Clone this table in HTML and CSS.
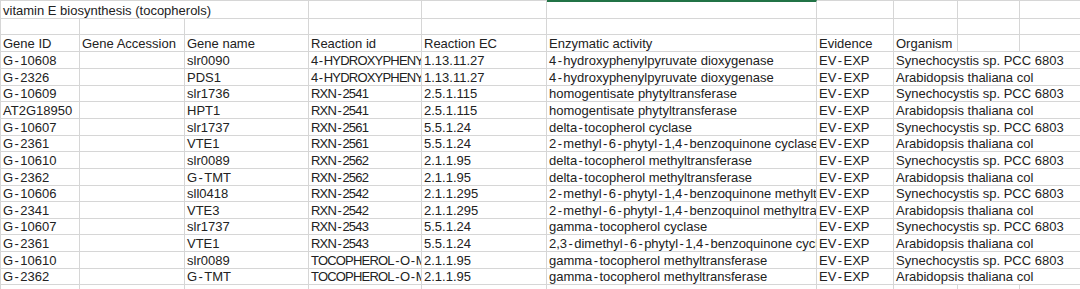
FILE: index.html
```html
<!DOCTYPE html>
<html>
<head>
<meta charset="utf-8">
<link rel="stylesheet" href="styles.css">
</head>
<body>
<div class="sheet">
  <!-- row 1 -->
  <div class="c top first title">vitamin E biosynthesis (tocopherols)</div>
  <div class="c top"></div>
  <div class="c top"></div>
  <div class="c top sel"></div>
  <div class="c top"></div>
  <div class="c top"></div>
  <div class="c top"></div>
  <div class="c top"></div>
  <!-- row 2 -->
  <div class="c first"></div><div class="c"></div><div class="c"></div><div class="c"></div><div class="c"></div><div class="c"></div><div class="c"></div><div class="c"></div><div class="c"></div><div class="c"></div>
  <!-- row 3 -->
  <div class="c first">Gene ID</div><div class="c">Gene Accession</div><div class="c">Gene name</div><div class="c">Reaction id</div><div class="c">Reaction EC</div><div class="c">Enzymatic activity</div><div class="c">Evidence</div><div class="c">Organism</div><div class="c"></div><div class="c"></div>

  <div class="c first">G<span class="h">-</span>10608</div><div class="c"></div><div class="c">slr0090</div><div class="c up">4<span class="h">-</span>HYDROXYPHENYLPYRUVATE<span class="h">-</span>DIOXYGENASE<span class="h">-</span>RXN</div><div class="c">1.13.11.27</div><div class="c">4<span class="h">-</span>hydroxyphenylpyruvate dioxygenase</div><div class="c">EV<span class="h">-</span>EXP</div><div class="c org">Synechocystis sp. PCC 6803</div>
  <div class="c first">G<span class="h">-</span>2326</div><div class="c"></div><div class="c">PDS1</div><div class="c up">4<span class="h">-</span>HYDROXYPHENYLPYRUVATE<span class="h">-</span>DIOXYGENASE<span class="h">-</span>RXN</div><div class="c">1.13.11.27</div><div class="c">4<span class="h">-</span>hydroxyphenylpyruvate dioxygenase</div><div class="c">EV<span class="h">-</span>EXP</div><div class="c org">Arabidopsis thaliana col</div>
  <div class="c first">G<span class="h">-</span>10609</div><div class="c"></div><div class="c">slr1736</div><div class="c up">RXN<span class="h">-</span>2541</div><div class="c">2.5.1.115</div><div class="c">homogentisate phytyltransferase</div><div class="c">EV<span class="h">-</span>EXP</div><div class="c org">Synechocystis sp. PCC 6803</div>
  <div class="c first">AT2G18950</div><div class="c"></div><div class="c">HPT1</div><div class="c up">RXN<span class="h">-</span>2541</div><div class="c">2.5.1.115</div><div class="c">homogentisate phytyltransferase</div><div class="c">EV<span class="h">-</span>EXP</div><div class="c org">Arabidopsis thaliana col</div>
  <div class="c first">G<span class="h">-</span>10607</div><div class="c"></div><div class="c">slr1737</div><div class="c up">RXN<span class="h">-</span>2561</div><div class="c">5.5.1.24</div><div class="c">delta<span class="h">-</span>tocopherol cyclase</div><div class="c">EV<span class="h">-</span>EXP</div><div class="c org">Synechocystis sp. PCC 6803</div>
  <div class="c first">G<span class="h">-</span>2361</div><div class="c"></div><div class="c">VTE1</div><div class="c up">RXN<span class="h">-</span>2561</div><div class="c">5.5.1.24</div><div class="c">2<span class="h">-</span>methyl<span class="h">-</span>6<span class="h">-</span>phytyl<span class="h">-</span>1<span class="cm">,</span>4<span class="h">-</span>benzoquinone cyclase</div><div class="c">EV<span class="h">-</span>EXP</div><div class="c org">Arabidopsis thaliana col</div>
  <div class="c first">G<span class="h">-</span>10610</div><div class="c"></div><div class="c">slr0089</div><div class="c up">RXN<span class="h">-</span>2562</div><div class="c">2.1.1.95</div><div class="c">delta<span class="h">-</span>tocopherol methyltransferase</div><div class="c">EV<span class="h">-</span>EXP</div><div class="c org">Synechocystis sp. PCC 6803</div>
  <div class="c first">G<span class="h">-</span>2362</div><div class="c"></div><div class="c">G<span class="h">-</span>TMT</div><div class="c up">RXN<span class="h">-</span>2562</div><div class="c">2.1.1.95</div><div class="c">delta<span class="h">-</span>tocopherol methyltransferase</div><div class="c">EV<span class="h">-</span>EXP</div><div class="c org">Arabidopsis thaliana col</div>
  <div class="c first">G<span class="h">-</span>10606</div><div class="c"></div><div class="c">sll0418</div><div class="c up">RXN<span class="h">-</span>2542</div><div class="c">2.1.1.295</div><div class="c">2<span class="h">-</span>methyl<span class="h">-</span>6<span class="h">-</span>phytyl<span class="h">-</span>1<span class="cm">,</span>4<span class="h">-</span>benzoquinone methyltransferase</div><div class="c">EV<span class="h">-</span>EXP</div><div class="c org">Synechocystis sp. PCC 6803</div>
  <div class="c first">G<span class="h">-</span>2341</div><div class="c"></div><div class="c">VTE3</div><div class="c up">RXN<span class="h">-</span>2542</div><div class="c">2.1.1.295</div><div class="c">2<span class="h">-</span>methyl<span class="h">-</span>6<span class="h">-</span>phytyl<span class="h">-</span>1<span class="cm">,</span>4<span class="h">-</span>benzoquinol methyltransferase</div><div class="c">EV<span class="h">-</span>EXP</div><div class="c org">Arabidopsis thaliana col</div>
  <div class="c first">G<span class="h">-</span>10607</div><div class="c"></div><div class="c">slr1737</div><div class="c up">RXN<span class="h">-</span>2543</div><div class="c">5.5.1.24</div><div class="c">gamma<span class="h">-</span>tocopherol cyclase</div><div class="c">EV<span class="h">-</span>EXP</div><div class="c org">Synechocystis sp. PCC 6803</div>
  <div class="c first">G<span class="h">-</span>2361</div><div class="c"></div><div class="c">VTE1</div><div class="c up">RXN<span class="h">-</span>2543</div><div class="c">5.5.1.24</div><div class="c">2<span class="cm">,</span>3<span class="h">-</span>dimethyl<span class="h">-</span>6<span class="h">-</span>phytyl<span class="h">-</span>1<span class="cm">,</span>4<span class="h">-</span>benzoquinone cyclase</div><div class="c">EV<span class="h">-</span>EXP</div><div class="c org">Arabidopsis thaliana col</div>
  <div class="c first">G<span class="h">-</span>10610</div><div class="c"></div><div class="c">slr0089</div><div class="c up">TOCOPHEROL<span class="h">-</span>O<span class="h">-</span>METHYLTRANSFERASE<span class="h">-</span>RXN</div><div class="c">2.1.1.95</div><div class="c">gamma<span class="h">-</span>tocopherol methyltransferase</div><div class="c">EV<span class="h">-</span>EXP</div><div class="c org">Synechocystis sp. PCC 6803</div>
  <div class="c first">G<span class="h">-</span>2362</div><div class="c"></div><div class="c">G<span class="h">-</span>TMT</div><div class="c up">TOCOPHEROL<span class="h">-</span>O<span class="h">-</span>METHYLTRANSFERASE<span class="h">-</span>RXN</div><div class="c">2.1.1.95</div><div class="c">gamma<span class="h">-</span>tocopherol methyltransferase</div><div class="c">EV<span class="h">-</span>EXP</div><div class="c org">Arabidopsis thaliana col</div>

  <div class="c first"></div><div class="c"></div><div class="c"></div><div class="c"></div><div class="c"></div><div class="c"></div><div class="c"></div><div class="c"></div><div class="c"></div><div class="c"></div>
</div>
</body>
</html>
```

FILE: styles.css
```css
html, body {
  margin: 0;
  padding: 0;
  background: #ffffff;
  overflow: hidden;
}

body {
  width: 1080px;
  height: 289px;
}

.sheet {
  display: grid;
  grid-template-columns: 80px 105px 124px 113px 125px 270px 77px 64px 62px 100px;
  grid-template-rows: 19px 16px 17px 17px 17px 16px 17px 17px 16px 17px 17px 16px 17px 16px 17px 17px 16px 17px;
  font-family: "Liberation Sans", Arial, sans-serif;
  font-size: 13px;
  color: #222222;
}

.c {
  box-sizing: border-box;
  border-right: 1px solid #d6d6d6;
  border-bottom: 1px solid #d6d6d6;
  padding-left: 2px;
  white-space: nowrap;
  overflow: hidden;
  display: flex;
  align-items: flex-end;
  line-height: 15px;
  padding-bottom: 0;
}

.h {
  margin: 0 1.4px;
}

.cm {
  margin-right: 0;
}

.up {
  letter-spacing: -0.8px;
}

.first {
  border-left: 1px solid #d6d6d6;
}

.top {
  border-top: 1px solid #d6d6d6;
}

.sel {
  border-top: 2px solid #217346;
}

.title {
  grid-column: span 3;
}

.org {
  grid-column: span 3;
}
```
